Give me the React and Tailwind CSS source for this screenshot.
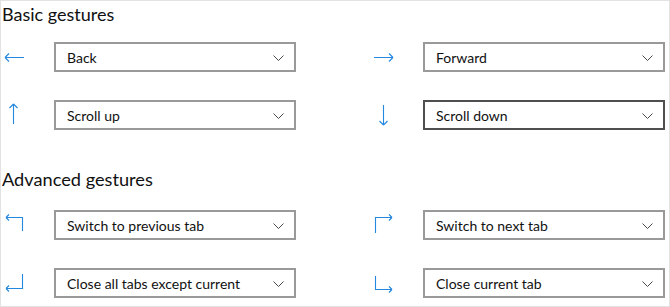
const BLUE = "#2488e0";

function ArrowLeft() {
  return (
    <svg width="24" height="24" viewBox="0 0 24 24" fill="none" stroke={BLUE} strokeWidth="1.1">
      <path d="M2 12.5H21M2 12.5L6 8.5M2 12.5L6 16.5" />
    </svg>
  );
}

function ArrowRight() {
  return (
    <svg width="24" height="24" viewBox="0 0 24 24" fill="none" stroke={BLUE} strokeWidth="1.1">
      <path d="M2 12.5H21M21 12.5L17 8.5M21 12.5L17 16.5" />
    </svg>
  );
}

function ArrowUp() {
  return (
    <svg width="24" height="24" viewBox="0 0 24 24" fill="none" stroke={BLUE} strokeWidth="1.1">
      <path d="M10.5 1V21M10.5 1L6.5 5M10.5 1L14.5 5" />
    </svg>
  );
}

function ArrowDown() {
  return (
    <svg width="24" height="24" viewBox="0 0 24 24" fill="none" stroke={BLUE} strokeWidth="1.1">
      <path d="M11.5 2V22M11.5 22L7.5 18M11.5 22L15.5 18" />
    </svg>
  );
}

function TurnUpLeft() {
  return (
    <svg width="24" height="24" viewBox="0 0 24 24" fill="none" stroke={BLUE} strokeWidth="1.1">
      <path d="M19.5 18V4.5H3M3 4.5L6 1.5M3 4.5L6 7.5" />
    </svg>
  );
}

function TurnUpRight() {
  return (
    <svg width="24" height="24" viewBox="0 0 24 24" fill="none" stroke={BLUE} strokeWidth="1.1">
      <path d="M3.5 20V4.5H20M20 4.5L17 1.5M20 4.5L17 7.5" />
    </svg>
  );
}

function TurnDownLeft() {
  return (
    <svg width="24" height="24" viewBox="0 0 24 24" fill="none" stroke={BLUE} strokeWidth="1.1">
      <path d="M19.5 3V17.5H3M3 17.5L6 14.5M3 17.5L6 20.5" />
    </svg>
  );
}

function TurnDownRight() {
  return (
    <svg width="24" height="24" viewBox="0 0 24 24" fill="none" stroke={BLUE} strokeWidth="1.1">
      <path d="M3.5 5V18.5H20M20 18.5L17 15.5M20 18.5L17 21.5" />
    </svg>
  );
}

function Chevron() {
  return (
    <svg width="11" height="6" viewBox="0 0 11 6" fill="none" stroke="#4a4a4a" strokeWidth="1">
      <path d="M0.5 0.5L5.5 5.5L10.5 0.5" />
    </svg>
  );
}

function GestureSelect({ icon, label, active }) {
  return (
    <div className="flex h-[30px] items-center">
      <div className="flex w-[52px] items-center pl-[1px]">{icon}</div>
      <div
        className={
          active
            ? "flex h-[30px] w-[242px] items-center justify-between border-2 border-[#4f4f4f] pl-[11px] pr-[10px]"
            : "flex h-[30px] w-[242px] items-center justify-between border-2 border-[#999999] pl-[11px] pr-[10px]"
        }
      >
        <span className="text-[14px] text-[#111]">{label}</span>
        <span className="mt-[2px] flex">
          <Chevron />
        </span>
      </div>
    </div>
  );
}

function Row({ left, right }) {
  return (
    <div className="flex gap-[75px]">
      {left}
      {right}
    </div>
  );
}

export default function App() {
  return (
    <div className="h-[307px] w-[670px] border border-[#e2e2e2] bg-white pl-[1px] font-['Lato',sans-serif]">
      <h2 className="h-[27px] text-[18px] font-normal leading-[27px] text-[#111]">Basic gestures</h2>

      <div className="mt-[14px] flex flex-col gap-[28px]">
        <Row
          left={<GestureSelect icon={<ArrowLeft />} label="Back" />}
          right={<GestureSelect icon={<ArrowRight />} label="Forward" />}
        />
        <Row
          left={<GestureSelect icon={<ArrowUp />} label="Scroll up" />}
          right={<GestureSelect icon={<ArrowDown />} label="Scroll down" active />}
        />
      </div>

      <h2 className="mt-[36px] h-[27px] text-[18.2px] font-normal leading-[27px] text-[#111]">Advanced gestures</h2>

      <div className="mt-[17px] flex flex-col gap-[28px]">
        <Row
          left={<GestureSelect icon={<TurnUpLeft />} label="Switch to previous tab" />}
          right={<GestureSelect icon={<TurnUpRight />} label="Switch to next tab" />}
        />
        <Row
          left={<GestureSelect icon={<TurnDownLeft />} label="Close all tabs except current" />}
          right={<GestureSelect icon={<TurnDownRight />} label="Close current tab" />}
        />
      </div>
    </div>
  );
}
